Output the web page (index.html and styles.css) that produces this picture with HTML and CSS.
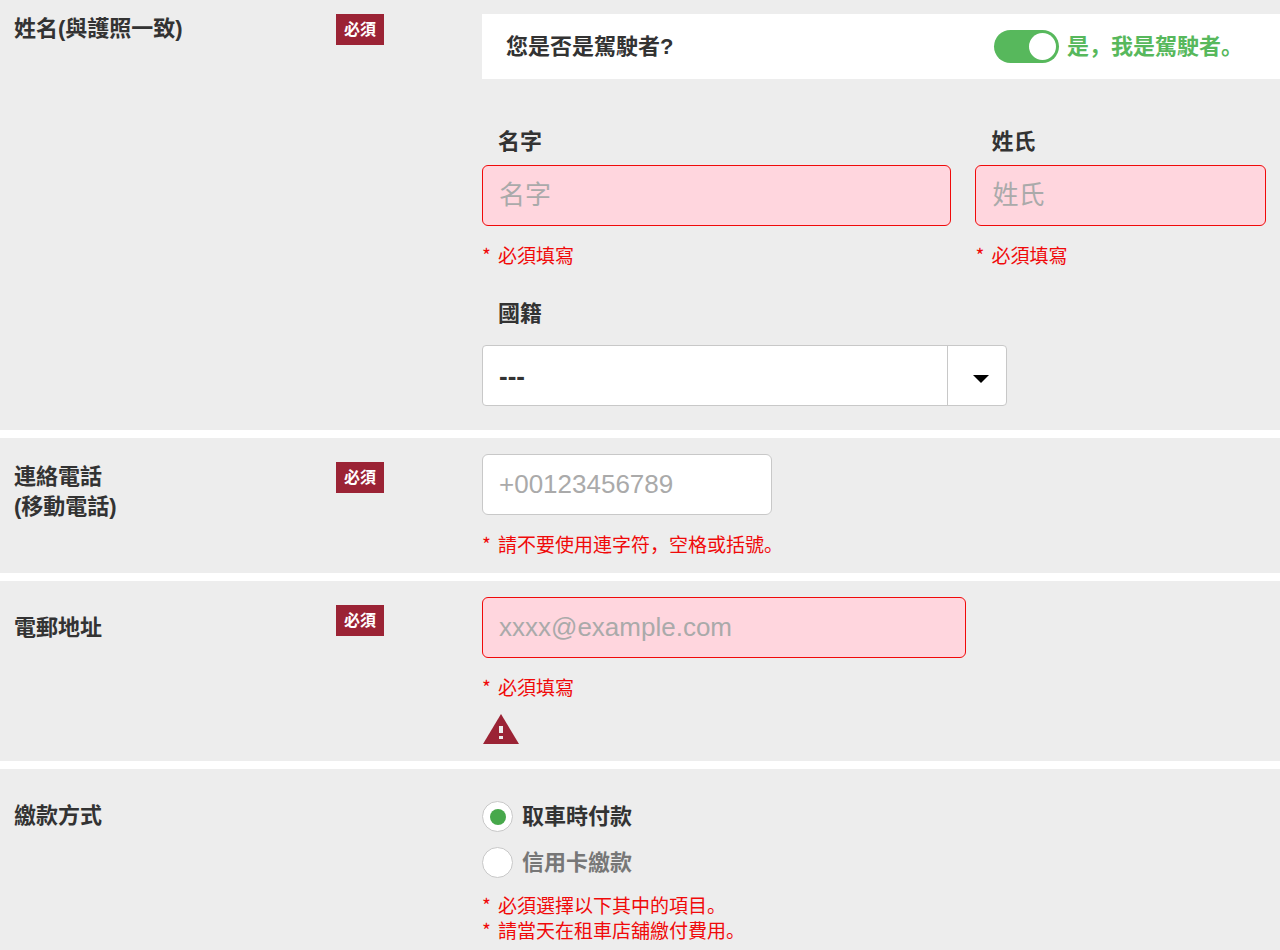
FILE: index.html
```
<!DOCTYPE html>
<html lang="zh-Hans">
<head>
    <meta charset="UTF-8">
    <meta name="viewport" content="width=device-width, initial-scale=1.0">
    <title>租車預約</title>
    <link rel="stylesheet" href="styles.css">
</head>
<body>

    <form class="booking-form">

        <!-- Name -->
        <section class="form-row form-row-first">
            <div class="row-title">姓名(與護照一致)</div>
            <div class="row-badge"><span class="badge">必須</span></div>
            <div class="row-content">
                <div class="driver-box">
                    <span>您是否是駕駛者?</span>
                    <label class="driver-switch">
                        <input class="switch" type="checkbox" name="driver" checked>
                        <span>是，我是駕駛者。</span>
                    </label>
                </div>

                <div class="name-fields">
                    <div>
                        <label class="field-label" for="first-name">名字</label>
                        <input class="field field-error" type="text" id="first-name" placeholder="名字">
                        <ul class="notes"><li>必須填寫</li></ul>
                    </div>
                    <div>
                        <label class="field-label" for="last-name">姓氏</label>
                        <input class="field field-error" type="text" id="last-name" placeholder="姓氏">
                        <ul class="notes"><li>必須填寫</li></ul>
                    </div>
                </div>

                <div class="nationality">
                    <label class="field-label" for="country">國籍</label>
                    <div class="select-wrap">
                        <select class="field select" id="country">
                            <option>---</option>
                        </select>
                    </div>
                </div>
            </div>
        </section>

        <!-- Phone -->
        <section class="form-row">
            <label class="row-title" for="phone">連絡電話<br>(移動電話)</label>
            <div class="row-badge"><span class="badge">必須</span></div>
            <div class="row-content">
                <input class="field field-phone" type="tel" id="phone" placeholder="+00123456789">
                <ul class="notes"><li>請不要使用連字符，空格或括號。</li></ul>
            </div>
        </section>

        <!-- Email -->
        <section class="form-row">
            <label class="row-title row-title-low" for="email">電郵地址</label>
            <div class="row-badge"><span class="badge">必須</span></div>
            <div class="row-content">
                <input class="field field-email field-error" type="email" id="email" placeholder="xxxx@example.com">
                <ul class="notes"><li>必須填寫</li></ul>
                <svg class="warning" width="36" height="31" viewBox="0 0 36 31" aria-hidden="true">
                    <path d="M18 1L36 31H0Z" fill="#9b2335"/>
                    <path d="M16 13h4v7h-4zM16 23h4v3h-4z" fill="#ededed"/>
                </svg>
            </div>
        </section>

        <!-- Payment -->
        <section class="form-row form-row-last">
            <div class="row-title row-title-low" id="payment-title">繳款方式</div>
            <div class="row-badge"></div>
            <div class="row-content">
                <div class="payment" role="radiogroup" aria-labelledby="payment-title">
                    <label class="radio-label">
                        <input class="radio" type="radio" name="payment" checked>
                        <span>取車時付款</span>
                    </label>
                    <label class="radio-label">
                        <input class="radio" type="radio" name="payment">
                        <span>信用卡繳款</span>
                    </label>
                </div>
                <ul class="notes notes-payment">
                    <li>必須選擇以下其中的項目。</li>
                    <li>請當天在租車店舖繳付費用。</li>
                </ul>
            </div>
        </section>

    </form>

</body>
</html>
```
FILE: styles.css
```
:root {
    --grey: #ededed;
    --text: #333;
    --border: #c8c8c8;
    --error: #f00a0a;
    --pink: #ffd6de;
    --crimson: #9b2335;
    --green: #57b85c;
}

* {
    box-sizing: border-box;
}

body {
    margin: 0;
    background: white;
    color: var(--text);
    font-family: "Liberation Sans", "Noto Sans CJK SC", sans-serif;
    font-size: 22px;
    font-weight: bold;
    line-height: 30px;
}

/* Rows */
.booking-form {
    display: flex;
    flex-direction: column;
    gap: 8px;
    min-height: 100vh;
}

.form-row {
    display: grid;
    grid-template-columns: 322px 146px minmax(0, 1fr);
    padding: 16px 0 17px 14px;
    background: var(--grey);
}

.form-row-first {
    padding: 14px 0 24px 14px;
}

.form-row-first .row-title,
.form-row-first .row-badge {
    padding-top: 0;
}

.form-row-last {
    flex: 1;
}

.row-title,
.row-badge {
    padding-top: 8px;
}

.row-title-low {
    padding-top: 16px;
}

.badge {
    display: inline-block;
    padding: 0 8px;
    background: var(--crimson);
    color: white;
    font-size: 16px;
    line-height: 31px;
    vertical-align: top;
}

/* Driver switch */
.driver-box {
    display: flex;
    align-items: center;
    justify-content: space-between;
    height: 65px;
    padding: 0 37px 0 24px;
    background: white;
}

.driver-switch {
    display: flex;
    align-items: center;
    gap: 8px;
    color: var(--green);
}

.switch {
    appearance: none;
    display: flex;
    align-items: center;
    justify-content: flex-end;
    width: 65px;
    height: 33px;
    margin: 0;
    padding: 3px;
    border-radius: 17px;
    background: var(--green);
    cursor: pointer;
}

.switch::before {
    content: "";
    width: 27px;
    height: 27px;
    border-radius: 50%;
    background: white;
}

.switch:not(:checked) {
    justify-content: flex-start;
    background: #bbb;
}

/* Fields */
.name-fields {
    display: grid;
    grid-template-columns: 470fr 291fr;
    gap: 24px;
    padding: 48px 14px 0 0;
}

.field-label {
    display: block;
    margin-bottom: 8px;
    padding-left: 16px;
}

.field {
    display: block;
    width: 100%;
    height: 61px;
    margin: 0;
    padding: 0 16px;
    border: 1px solid var(--border);
    border-radius: 6px;
    background: white;
    color: var(--text);
    font-family: inherit;
    font-size: 26px;
}

.field::placeholder {
    color: #aaa;
    opacity: 1;
}

.field-error {
    border-color: var(--error);
    background: var(--pink);
}

.field-phone {
    max-width: 290px;
}

.field-email {
    max-width: 484px;
}

.nationality {
    margin-top: 32px;
}

.nationality .field-label {
    margin-bottom: 16px;
}

.select-wrap {
    position: relative;
    max-width: 525px;
}

.select {
    appearance: none;
    border-radius: 4px;
    font-weight: bold;
}

/* divider and arrow drawn over the select */
.select-wrap::before {
    content: "";
    position: absolute;
    top: 0;
    bottom: 0;
    right: 59px;
    border-left: 1px solid var(--border);
    pointer-events: none;
}

.select-wrap::after {
    content: "";
    position: absolute;
    top: 30px;
    right: 18px;
    border: 8px solid transparent;
    border-top-color: black;
    border-bottom: 0;
    pointer-events: none;
}

/* Red notes */
.notes {
    margin: 16px 0 0;
    padding: 0;
    list-style: none;
    color: var(--error);
    font-family: "Noto Sans CJK SC", "Liberation Sans", sans-serif;
    font-size: 19px;
    font-weight: normal;
    line-height: 25px;
}

.notes li {
    display: flex;
}

.notes li::before {
    content: "*";
    width: 16px;
}

.warning {
    display: block;
    margin: 14px 0 0 1px;
}

/* Payment */
.payment {
    display: flex;
    flex-direction: column;
    gap: 15px;
    padding-top: 16px;
}

.radio-label {
    display: flex;
    align-items: center;
    gap: 9px;
}

.radio {
    appearance: none;
    display: grid;
    place-items: center;
    width: 31px;
    height: 31px;
    margin: 0;
    border: 1px solid var(--border);
    border-radius: 50%;
    background: white;
}

.radio:checked::before {
    content: "";
    width: 16px;
    height: 16px;
    border-radius: 50%;
    background: #47a84b;
}

.radio:not(:checked) + span {
    color: #777;
}

.notes-payment {
    margin-top: 14px;
}
```
